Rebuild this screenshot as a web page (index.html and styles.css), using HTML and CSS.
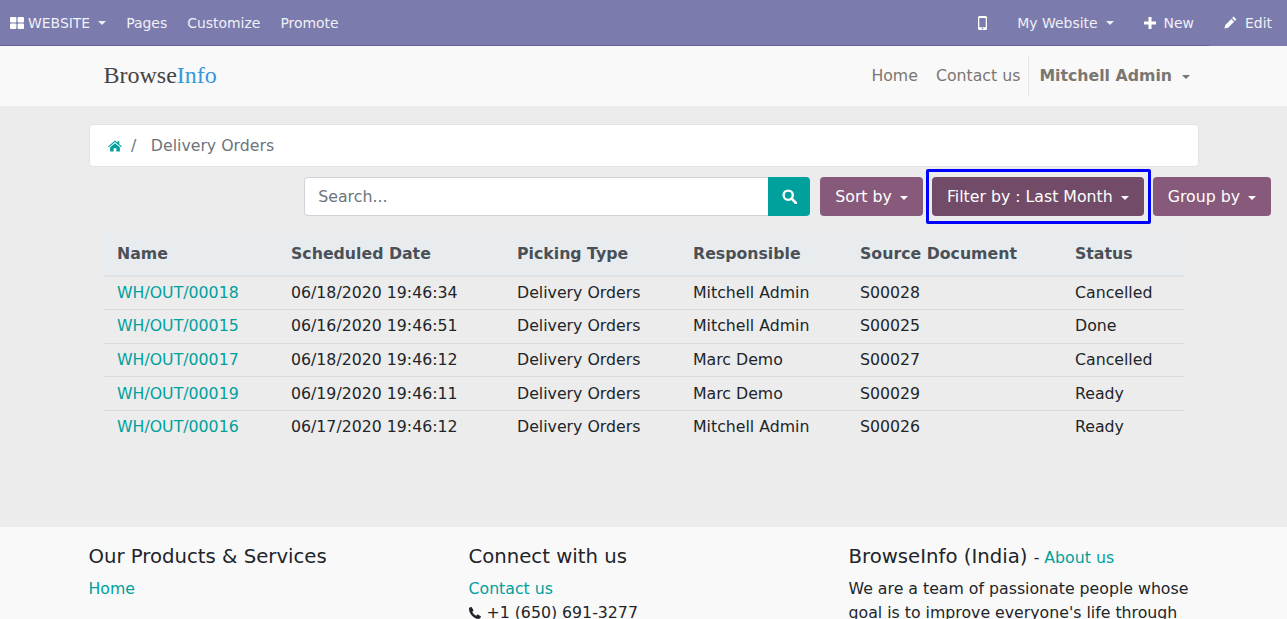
FILE: index.html
```html
<!DOCTYPE html>
<html lang="en">
<head>
<meta charset="utf-8">
<title>Delivery Orders</title>
<link rel="stylesheet" href="styles.css">
</head>
<body>
<nav class="topbar">
  <div class="topbar-left">
    <a class="top-item brand-item">
      <svg class="icon-th" viewBox="0 0 14 12" width="14" height="12"><rect x="0" y="0" width="6.4" height="5.4" rx="1"/><rect x="7.6" y="0" width="6.4" height="5.4" rx="1"/><rect x="0" y="6.6" width="6.4" height="5.4" rx="1"/><rect x="7.6" y="6.6" width="6.4" height="5.4" rx="1"/></svg>
      <span>WEBSITE</span><i class="caret caret-top"></i>
    </a>
    <a class="top-item">Pages</a>
    <a class="top-item">Customize</a>
    <a class="top-item">Promote</a>
  </div>
  <div class="topbar-right">
    <a class="top-item mobile-item"><svg viewBox="0 0 9 14" width="9" height="14"><path fill-rule="evenodd" d="M1.5 0h6A1.5 1.5 0 0 1 9 1.5v11A1.5 1.5 0 0 1 7.500 14h-6A1.500 1.500 0 0 1 0 12.500v-11A1.500 1.500 0 0 1 1.500 0zM1.300 2v9.300h6.400V2zM4.500 11.800a.8.8 0 1 0 0 1.600.8.8 0 0 0 0-1.600z" fill="#fff"/></svg></a>
    <a class="top-item site-item">My Website<i class="caret caret-top"></i></a>
    <a class="top-item new-item"><svg viewBox="0 0 12 12" width="12" height="12"><path d="M4.500 0h3v4.500H12v3H7.500V12h-3V7.500H0v-3h4.500z" fill="#fff"/></svg><span>New</span></a>
    <a class="top-item edit-item"><svg viewBox="0 0 13 13" width="13" height="13"><path d="M9.600.6l2.800 2.800-1.500 1.500-2.800-2.800zM7.300 2.900l2.800 2.800-6 6L.4 12.600l.9-3.700z" fill="#fff"/></svg><span>Edit</span></a>
  </div>
</nav>
<header class="site-header">
  <div class="container header-row">
    <a class="logo">Browse<span class="logo-accent">Info</span></a>
    <div class="header-nav">
      <a class="header-link">Home</a>
      <a class="header-link">Contact us</a>
      <a class="header-user">Mitchell Admin<i class="caret caret-user"></i></a>
    </div>
  </div>
</header>
<main class="main">
  <div class="container">
    <div class="breadcrumb">
      <svg class="icon-home" viewBox="0 0 15 12" width="14" height="12"><path d="M7.500 0l2.600 2.300V1h2v3.100L15 6.500l-.8.900L7.500 1.700.8 7.400 0 6.500zM7.500 3l5.200 4.400V12H9V8.500H6V12H2.300V7.400z" fill="#00a09d"/></svg>
      <span class="crumb-sep">/</span>
      <span class="crumb-current">Delivery Orders</span>
    </div>
  </div>
  <div class="toolbar">
    <div class="search">
      <div class="search-input">Search...</div>
      <button class="search-btn"><svg viewBox="0 0 14 14" width="15" height="15"><circle cx="5.800" cy="5.800" r="4.300" fill="none" stroke="#fff" stroke-width="2.200"/><path d="M9 9l4 4" stroke="#fff" stroke-width="2.500" stroke-linecap="round"/></svg></button>
    </div>
    <button class="btn">Sort by<i class="caret caret-btn"></i></button>
    <div class="highlight"><button class="btn btn-active">Filter by : Last Month<i class="caret caret-btn"></i></button></div>
    <button class="btn">Group by<i class="caret caret-btn"></i></button>
  </div>
  <table class="orders">
    <thead>
      <tr><th class="c1">Name</th><th class="c2">Scheduled Date</th><th class="c3">Picking Type</th><th class="c4">Responsible</th><th class="c5">Source Document</th><th class="c6">Status</th></tr>
    </thead>
    <tbody>
      <tr><td><a>WH/OUT/00018</a></td><td>06/18/2020 19:46:34</td><td>Delivery Orders</td><td>Mitchell Admin</td><td>S00028</td><td>Cancelled</td></tr>
      <tr><td><a>WH/OUT/00015</a></td><td>06/16/2020 19:46:51</td><td>Delivery Orders</td><td>Mitchell Admin</td><td>S00025</td><td>Done</td></tr>
      <tr><td><a>WH/OUT/00017</a></td><td>06/18/2020 19:46:12</td><td>Delivery Orders</td><td>Marc Demo</td><td>S00027</td><td>Cancelled</td></tr>
      <tr><td><a>WH/OUT/00019</a></td><td>06/19/2020 19:46:11</td><td>Delivery Orders</td><td>Marc Demo</td><td>S00029</td><td>Ready</td></tr>
      <tr><td><a>WH/OUT/00016</a></td><td>06/17/2020 19:46:12</td><td>Delivery Orders</td><td>Mitchell Admin</td><td>S00026</td><td>Ready</td></tr>
    </tbody>
  </table>
</main>
<footer class="footer">
  <div class="container footer-row">
    <section class="footer-col">
      <h5 class="footer-title">Our Products &amp; Services</h5>
      <a class="footer-link">Home</a>
    </section>
    <section class="footer-col">
      <h5 class="footer-title">Connect with us</h5>
      <a class="footer-link">Contact us</a>
      <div class="phone"><svg viewBox="0 0 12 12" width="12" height="12"><path d="M2.700.3L4.400 3c.2.300.1.600-.1.800l-1 1c.4 1.500 2.300 3.500 3.900 3.900l1-1c.2-.2.500-.3.800-.1l2.700 1.700c.3.200.3.500.2.700-.5 1.200-1.500 1.900-2.500 1.900C5.200 12 0 6.800 0 1.700 0 1 .8 0 2 0c.3 0 .5 0 .7.300z" fill="#212529"/></svg><span>+1 (650) 691-3277</span></div>
    </section>
    <section class="footer-col">
      <h5 class="footer-title">BrowseInfo (India) <small class="about">- <a class="footer-link-inline">About us</a></small></h5>
      <p class="footer-text">We are a team of passionate people whose goal is to improve everyone's life through disruptive products.</p>
    </section>
  </div>
</footer>
</body>
</html>
```
FILE: styles.css
```css
* { box-sizing: border-box; }
html, body { margin: 0; padding: 0; height: 619px; overflow: hidden; }
body { font-family: "DejaVu Sans", sans-serif; font-size: 15.75px; line-height: 24px; color: #212529; background: #ececec; }
a { text-decoration: none; }

.caret { display: inline-block; width: 0; height: 0; border-top: 4px solid currentColor; border-left: 4px solid transparent; border-right: 4px solid transparent; vertical-align: 2px; }
.caret-top { margin-left: 8px; }
.caret-user { margin-left: 10px; color: #7a7670; }
.caret-btn { margin-left: 8px; }

.topbar { height: 46px; background: linear-gradient(to right, #5f5e97 1209px, #7c7bad 1209px) bottom / 100% 1px no-repeat, #7c7bad; display: flex; justify-content: space-between; color: #fff; font-size: 13.95px; }
.topbar-left, .topbar-right { display: flex; align-items: center; padding-bottom: 1px; }
.topbar-left { padding-left: 10px; gap: 20px; }
.topbar-right { padding-right: 15px; }
.top-item { display: flex; align-items: center; color: #f0f0f7; white-space: nowrap; }
.brand-item svg { fill: #fff; margin-right: 4px; }
.mobile-item, .site-item, .new-item { margin-right: 30px; }
.new-item svg, .edit-item svg { margin-right: 8px; }

.site-header { height: 60px; background: #f9f9f9; }
.container { width: 1140px; margin: 0 auto; padding: 0 15px; }
.header-row { height: 60px; display: flex; justify-content: space-between; align-items: center; }
.logo { font-family: "Liberation Serif", serif; font-size: 24px; color: #444; margin: -2px 0 0 15px; }
.logo-accent { color: #3498db; }
.header-nav { display: flex; align-items: center; padding-right: 8.5px; }
.header-link { color: #7a7670; margin-right: 18px; }
.header-link:nth-child(2) { margin-right: 8px; }
.header-user { color: #7a7670; font-weight: 700; border-left: 1px solid #e6e6e6; height: 40px; line-height: 40px; padding-left: 10px; }

.main { height: 421px; padding-top: 18px; }
.breadcrumb { height: 43px; background: #fff; border: 1px solid #e4e4e4; border-radius: 4px; display: flex; align-items: center; padding-left: 18px; color: #6c757d; }
.crumb-sep { margin-left: 9.500px; margin-right: 14.500px; }

.toolbar { display: flex; justify-content: flex-end; align-items: center; margin-top: 2px; padding-right: 16px; height: 55px; }
.search { display: flex; width: 506px; height: 39px; margin-right: 10px; }
.search-input { flex: 1; background: #fff; border: 1px solid #ced4da; border-right: 0; border-radius: 4px 0 0 4px; color: #6c757d; padding: 7px 13px; }
.search-btn { width: 42px; background: #00a09d; border: 0; border-radius: 0 4px 4px 0; display: flex; align-items: center; justify-content: center; padding: 0; }
.btn { height: 39px; background: #875a7b; border: 0; border-radius: 4px; color: #fff; font: inherit; padding: 0 15px; white-space: nowrap; }
.btn-active { background: #714b67; }
.highlight { border: 3px solid #0000ff; padding: 5px 4px 5px 3px; margin: 0 2px 0 3px; border-radius: 2px; display: flex; }

.orders { width: 1080px; margin: 9px 0 0 104px; border-collapse: collapse; table-layout: fixed; }
.orders th { height: 43px; background: #e9ecef; border-bottom: 2px solid #dee2e6; color: #495057; text-align: left; padding: 0 0 0 13px; font-weight: 700; }
.orders td { height: 33.600px; border-top: 1px solid #dadada; padding: 0 0 0 13px; white-space: nowrap; }
.orders tbody tr:first-child td { border-top: 0; }
.orders td a { color: #00a09d; }
.c1 { width: 174px; }
.c2 { width: 226px; }
.c3 { width: 176px; }
.c4 { width: 167px; }
.c5 { width: 215px; }
.c6 { width: 122px; }

.footer { background: #f9f9f9; height: 200px; padding-top: 17px; }
.footer-row { display: flex; }
.footer-col { flex: 0 0 380px; }
.footer-title { margin: 0 0 7px; font-size: 19.7px; font-weight: 400; line-height: 26px; }
.about { font-size: 15.75px; line-height: 1; }
.footer-link, .footer-link-inline { color: #00a09d; }
.footer-link { display: block; }
.phone { display: flex; align-items: center; gap: 6px; }
.footer-text { margin: 0; width: 350px; }
```
